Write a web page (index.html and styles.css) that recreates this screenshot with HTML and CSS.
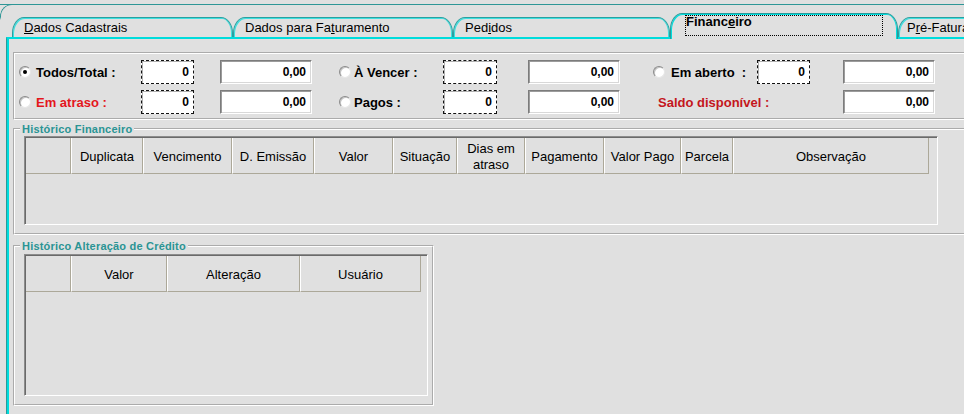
FILE: index.html
```html
<!DOCTYPE html>
<html lang="pt-BR">
<head>
<meta charset="utf-8">
<title>Financeiro</title>
<link rel="stylesheet" href="styles.css">
</head>
<body>
<div class="window">
  <div class="tabstrip">
    <div class="tab t1"><u>D</u>ados Cadastrais</div>
    <div class="tab t2">Dados para Fa<u>t</u>uramento</div>
    <div class="tab t3">Ped<u>i</u>dos</div>
    <div class="tab active"><span class="focus">Financ<u>e</u>iro</span></div>
    <div class="tab t5">P<u>r</u>é-Fatura</div>
  </div>
  <div class="panel">
    <div class="filters">
      <label class="opt c1"><span class="radio on"></span>Todos/Total :</label>
      <span class="fbox">0</span>
      <span class="vbox">0,00</span>
      <label class="opt c2"><span class="radio"></span>À Vencer :</label>
      <span class="fbox">0</span>
      <span class="vbox">0,00</span>
      <label class="opt c3"><span class="radio"></span>Em aberto&nbsp; :</label>
      <span class="fbox">0</span>
      <span class="vbox">0,00</span>

      <label class="opt c1 red"><span class="radio"></span>Em atraso :</label>
      <span class="fbox">0</span>
      <span class="vbox">0,00</span>
      <label class="opt c2"><span class="radio"></span>Pagos :</label>
      <span class="fbox">0</span>
      <span class="vbox">0,00</span>
      <span class="saldo">Saldo disponível :</span>
      <span class="vbox">0,00</span>
    </div>

    <fieldset class="group fin">
      <legend>Histórico Financeiro</legend>
      <div class="frame fin-frame">
        <div class="ghead fin-head">
          <div></div>
          <div>Duplicata</div>
          <div>Vencimento</div>
          <div>D. Emissão</div>
          <div>Valor</div>
          <div>Situação</div>
          <div>Dias em<br>atraso</div>
          <div>Pagamento</div>
          <div>Valor Pago</div>
          <div>Parcela</div>
          <div>Observação</div>
        </div>
      </div>
    </fieldset>

    <fieldset class="group credit">
      <legend>Histórico Alteração de Crédito</legend>
      <div class="frame credit-frame">
        <div class="ghead credit-head">
          <div></div>
          <div>Valor</div>
          <div>Alteração</div>
          <div>Usuário</div>
        </div>
      </div>
    </fieldset>
  </div>
</div>
</body>
</html>
```
FILE: styles.css
```css
* { box-sizing: border-box; }
html, body {
  margin: 0;
  padding: 0;
  overflow: hidden;
  background: #e0e0e0;
}
body {
  width: 964px;
  height: 414px;
  font-family: "Liberation Sans", Arial, sans-serif;
  font-size: 13px;
  color: #000;
}
u { text-decoration: underline; text-underline-offset: 1px; }

.window {
  position: relative;
  margin-top: 4px;
  width: 1010px;
  height: 410px;
  padding-left: 1px;
  border-top: 1px solid #2e9696;
}
/* rounded corner of the outer frame (only the curve is visible) */
.window::before {
  content: "";
  position: absolute;
  left: 0;
  top: -1px;
  width: 20px;
  height: 16px;
  border-top: 1px solid #2e9696;
  border-left: 1px solid #2e9696;
  border-top-left-radius: 12px;
  -webkit-mask-image: linear-gradient(to bottom, #000 13px, transparent 16px);
  mask-image: linear-gradient(to bottom, #000 13px, transparent 16px);
}

/* ---------- tabs ---------- */
.tabstrip {
  display: flex;
  align-items: flex-end;
  height: 24px;
  margin: 8px 0 0 11px;
}
.tab {
  flex: none;
  width: 220px;
  height: 20px;
  padding-left: 11px;
  border: 1px solid #2aa0a0;
  border-bottom: 0;
  border-radius: 12px 12px 0 0 / 16px 16px 0 0;
  background: #e0e0e0;
  box-shadow: inset 1px 1px 0 #3fe0e0, inset -1px 0 0 #3fe0e0;
  line-height: 19px;
  white-space: nowrap;
}
.t1 { width: 221px; }
.t3 { width: 217px; }
.t5 { padding-left: 8px; }
.tab.active {
  position: relative;
  z-index: 1;
  width: 228px;
  height: 26px;
  margin-bottom: -2px;
  padding: 1px 0 0 14px;
  border-color: #2a9a9a;
  box-shadow: inset 1px 1px 0 #00dede, inset -1px 0 0 #00dede;
}
.focus {
  display: block;
  width: 198px;
  height: 21px;
  border: 1px dotted #000;
  font-weight: bold;
  line-height: 11px;
}

/* ---------- panel ---------- */
.panel {
  margin-left: 5px;
  height: 377px;
  padding: 13px 0 0 6px;
  border-top: 2px solid #00dcdc;
  border-left: 1px solid #2a9a9a;
  box-shadow: inset 2px 0 0 #00dcdc;
}

.filters {
  display: grid;
  grid-template-columns: 126px 53px 118px 131px 54px 123px 137px 53px 125px;
  grid-template-rows: 24px 24px;
  row-gap: 6px;
  align-items: center;
  width: 1000px;
  height: 68px;
  padding: 6px 0 4px;
  border: 2px groove #ffffff;
}
.opt {
  display: flex;
  align-items: center;
  font-weight: bold;
  white-space: nowrap;
}
.opt.c1 { padding-left: 4px; }
.opt.c2 { padding-left: 27px; }
.opt.c3 { padding-left: 33px; }
.opt.red { color: #e4161c; }
.radio {
  position: relative;
  flex: none;
  width: 12px;
  height: 12px;
  border-radius: 50%;
  background: #fff;
  border: 1px solid;
  border-color: #8a8a8a #e6e6e6 #e6e6e6 #8a8a8a;
  box-shadow: inset 1px 1px 0 #c4c4c4;
}
.c1 .radio { margin-right: 5px; }
.c2 .radio { margin-right: 3px; }
.c3 .radio { margin-right: 6px; }
.radio.on::after {
  content: "";
  position: absolute;
  left: 3px;
  top: 3px;
  width: 4px;
  height: 4px;
  border-radius: 50%;
  background: #000;
}
.fbox {
  height: 24px;
  border: 1px dashed #111;
  background: #fff;
  box-shadow: inset 1px 1px 0 #b0b0b0;
  text-align: right;
  padding-right: 4px;
  font-weight: bold;
  font-size: 12px;
  line-height: 22px;
}
.vbox {
  justify-self: end;
  width: 92px;
  height: 24px;
  border: 1px solid;
  border-color: #7c7c7c #fff #fff #7c7c7c;
  box-shadow: inset 1px 1px 0 #9c9c9c, inset -1px -1px 0 #d8d8d8;
  background: #fff;
  text-align: right;
  padding-right: 5px;
  font-weight: bold;
  font-size: 12px;
  line-height: 22px;
}
.saldo {
  grid-column: span 2;
  padding-left: 38px;
  font-weight: bold;
  color: #c4161c;
  white-space: nowrap;
}

/* ---------- group boxes ---------- */
.group {
  margin: 3px 0 0;
  padding: 0 0 8px;
  border: 2px groove #ffffff;
  min-width: 0;
}
.group legend {
  margin-left: 5px;
  padding: 0 2px;
  font-size: 11px;
  font-weight: bold;
  letter-spacing: 0.2px;
  line-height: 12px;
  color: #2a9494;
}
.fin { width: 1000px; }
.credit { width: 421px; margin-top: 5px; }

.frame {
  margin: 1px 0 0 9px;
  padding: 1px 0 0 1px;
  border: 1px solid;
  border-color: #8c8c8c #fff #fff #8c8c8c;
  box-shadow: inset 1px 1px 0 #6a6a6a;
}
.fin-frame { width: 914px; height: 89px; }
.credit-frame { width: 404px; height: 142px; margin-top: 2px; }

.ghead {
  display: grid;
  height: 36px;
}
.fin-head { grid-template-columns: 45px 72px 89px 82px 79px 64px 68px 79px 77px 52px 196px; }
.credit-head { grid-template-columns: 45px 96px 133px 121px; }
.ghead > div {
  display: flex;
  align-items: center;
  justify-content: center;
  padding-top: 2px;
  text-align: center;
  line-height: 16px;
  white-space: nowrap;
  border-right: 1px solid #aca899;
  border-bottom: 1px solid #aca899;
  border-left: 1px solid #fff;
}
.ghead > div:first-child { border-left: 0; }
```
